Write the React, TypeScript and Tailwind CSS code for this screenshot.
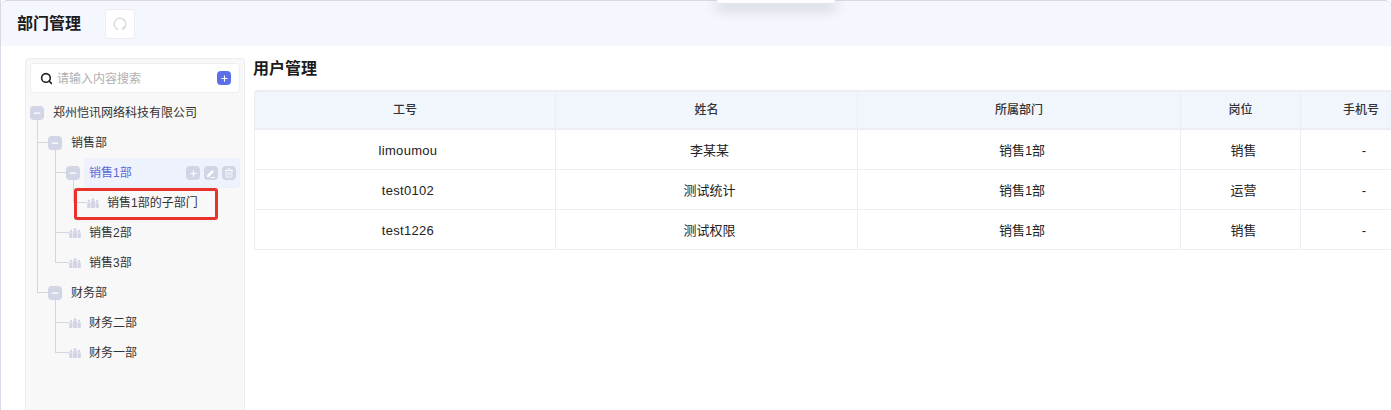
import { Search, Plus, Minus, Trash2 } from "lucide-react";

interface Dept {
  name: string;
  active?: boolean;
  marked?: boolean;
  children?: Dept[];
}

const tree: Dept = {
  name: "郑州恺讯网络科技有限公司",
  children: [
    {
      name: "销售部",
      children: [
        {
          name: "销售1部",
          active: true,
          children: [{ name: "销售1部的子部门", marked: true }],
        },
        { name: "销售2部" },
        { name: "销售3部" },
      ],
    },
    {
      name: "财务部",
      children: [{ name: "财务二部" }, { name: "财务一部" }],
    },
  ],
};

const users = [
  { id: "limoumou", name: "李某某", dept: "销售1部", post: "销售", phone: "-" },
  { id: "test0102", name: "测试统计", dept: "销售1部", post: "运营", phone: "-" },
  { id: "test1226", name: "测试权限", dept: "销售1部", post: "销售", phone: "-" },
];

function DeptIcon() {
  return (
    <svg width="12" height="10" viewBox="0 0 12 10" className="text-[#d3d5e4]" fill="currentColor">
      <circle cx="6" cy="1.5" r="1.5" />
      <rect x="3.9" y="3" width="4.2" height="7" rx="0.5" />
      <circle cx="2" cy="3" r="1.2" />
      <rect x="0.2" y="4.4" width="3.2" height="5.6" rx="0.5" />
      <circle cx="10" cy="3" r="1.2" />
      <rect x="8.6" y="4.4" width="3.2" height="5.6" rx="0.5" />
    </svg>
  );
}

function RowActions() {
  return (
    <div className="ml-auto mr-[3px] flex gap-[4px]">
      <span className="flex h-[14px] w-[14px] items-center justify-center rounded-[4px] bg-[#d2d5e6] text-white">
        <Plus size={9} strokeWidth={3} />
      </span>
      <span className="flex h-[14px] w-[14px] items-center justify-center rounded-[4px] bg-[#d2d5e6]">
        <svg width="10" height="10" viewBox="0 0 10 10" fill="#fff">
          <path d="M1 7.2 6.2 2l1.8 1.8L2.8 9H1Z" />
          <path d="M4.5 9H9v.8H4.5Z" />
        </svg>
      </span>
      <span className="flex h-[14px] w-[14px] items-center justify-center rounded-[4px] bg-[#d2d5e6] text-white">
        <Trash2 size={10} strokeWidth={2} />
      </span>
    </div>
  );
}

function TreeNode({ node, isRoot, isLast }: { node: Dept; isRoot?: boolean; isLast?: boolean }) {
  const hasChildren = !!node.children?.length;
  return (
    <div className="relative">
      {!isRoot && (
        <>
          <span
            className={
              isLast
                ? "absolute left-[-11px] top-[-15px] h-[30px] w-px bg-[#d3d5e4]"
                : "absolute bottom-0 left-[-11px] top-[-15px] w-px bg-[#d3d5e4]"
            }
          />
          <span
            className={
              hasChildren
                ? "absolute left-[-11px] top-[14px] h-px w-[11px] bg-[#d3d5e4]"
                : "absolute left-[-11px] top-[14px] h-px w-[14px] bg-[#d3d5e4]"
            }
          />
        </>
      )}
      <div className="relative flex h-[30px] items-center">
        {hasChildren ? (
          <span className="relative z-10 flex h-[14px] w-[14px] shrink-0 items-center justify-center rounded-[4px] bg-[#d2d5e6] text-white">
            <Minus size={10} strokeWidth={3} />
          </span>
        ) : (
          <span className="relative z-10 ml-[3px] flex w-[12px] shrink-0 items-center justify-center">
            <DeptIcon />
          </span>
        )}
        <div
          className={
            node.active
              ? "ml-[4px] flex h-[30px] flex-1 items-center rounded-[4px] border border-[#edf0fb] bg-[#eef2fd] pl-[4px] text-[#5b6ad6]"
              : hasChildren
                ? "ml-[9px] flex h-[30px] flex-1 items-center text-[#333]"
                : "ml-[8px] flex h-[30px] flex-1 items-center text-[#333]"
          }
        >
          {node.name}
          {node.active && <RowActions />}
        </div>
        {node.marked && (
          <span className="absolute left-[-10px] top-0 h-[32px] w-[144px] rounded-[3px] border-[3px] border-[#e8322b]" />
        )}
      </div>
      {hasChildren && (
        <div className="pl-[18px]">
          {node.children!.map((child, index) => (
            <TreeNode key={child.name} node={child} isLast={index === node.children!.length - 1} />
          ))}
        </div>
      )}
    </div>
  );
}

export default function App() {
  return (
    <div className="relative h-[410px] w-[1391px] overflow-hidden border-l border-[#d9d9e6] bg-white font-['Liberation_Sans','Noto_Sans_CJK_SC',sans-serif]">
      {/* Page header */}
      <header className="flex h-[46px] items-center rounded-t-[6px] border-t border-[#d9d9e6] bg-gradient-to-r from-[#f5f7fe] to-[#f5f7ff] pl-[16px]">
        <h1 className="pt-[1px] text-[16px] font-bold text-[#1c1c1c]">部门管理</h1>
        <button className="ml-[24px] flex h-[30px] w-[30px] items-center justify-center rounded-[4px] border border-[#eeeef2] bg-white">
          <svg width="14" height="14" viewBox="0 0 14 14" fill="none" stroke="#d8d8dd" strokeWidth="1.4">
            <path d="M5.2 12.6A5.8 5.8 0 1 1 10.6 11.6" />
            <path d="M10.6 9.6v2.2H8.6" />
          </svg>
        </button>
      </header>
      <div className="absolute left-[716px] top-0 h-[3px] w-[118px] rounded-b-[4px] bg-white shadow-[0_4px_14px_2px_rgba(0,0,0,0.2)]" />

      <div className="flex pl-[24px] pt-[12px]">
        {/* Department tree */}
        <aside className="h-[360px] w-[220px] shrink-0 rounded-t-[4px] border border-[#ececef] bg-[#f8f8f9] px-[4px] pt-[4px] text-[12px]">
          <div className="flex h-[30px] items-center rounded-[4px] border border-[#efeff2] bg-white pl-[9px] pr-[8px]">
            <Search size={13} strokeWidth={3} className="text-[#222]" />
            <span className="ml-[4px] pt-[1px] text-[#b0b0b0]">请输入内容搜索</span>
            <span className="ml-auto flex h-[14px] w-[14px] items-center justify-center rounded-[4px] bg-[#5b6fe8] text-white">
              <Plus size={9} strokeWidth={3} />
            </span>
          </div>
          <div className="mt-[5px]">
            <TreeNode node={tree} isRoot />
          </div>
        </aside>

        {/* User list */}
        <main className="ml-[8px] min-w-0 flex-1">
          <h2 className="flex h-[20px] items-center pt-[1px] text-[16px] font-bold text-[#1c1c1c]">用户管理</h2>
          <table className="ml-[1px] mt-[12px] w-[1167px] table-fixed border-separate border-spacing-0 text-[13px] text-[#222]">
            <colgroup>
              <col className="w-[302px]" />
              <col className="w-[302px]" />
              <col className="w-[323px]" />
              <col className="w-[120px]" />
              <col className="w-[120px]" />
            </colgroup>
            <thead>
              <tr className="h-[40px] bg-[#f1f5fc] text-[12px] text-[#333]">
                <th className="rounded-tl-[4px] border-x border-y-2 border-[#eceef3] font-medium">工号</th>
                <th className="border-y-2 border-r border-[#eceef3] font-medium">姓名</th>
                <th className="border-y-2 border-r border-[#eceef3] font-medium">所属部门</th>
                <th className="border-y-2 border-r border-[#eceef3] font-medium">岗位</th>
                <th className="border-y-2 border-[#eceef3] font-medium">手机号</th>
              </tr>
            </thead>
            <tbody>
              {users.map((user) => (
                <tr key={user.id} className="h-[40px]">
                  <td className="border-x border-b border-[#eceef3] pl-[6px] pt-[2px] text-center tracking-[0.3px]">{user.id}</td>
                  <td className="border-b border-r border-[#eceef3] pl-[6px] pt-[2px] text-center">{user.name}</td>
                  <td className="border-b border-r border-[#eceef3] pl-[6px] pt-[2px] text-center">{user.dept}</td>
                  <td className="border-b border-r border-[#eceef3] pl-[6px] pt-[2px] text-center">{user.post}</td>
                  <td className="border-b border-[#eceef3] pl-[6px] pt-[2px] text-center">{user.phone}</td>
                </tr>
              ))}
            </tbody>
          </table>
        </main>
      </div>
    </div>
  );
}
